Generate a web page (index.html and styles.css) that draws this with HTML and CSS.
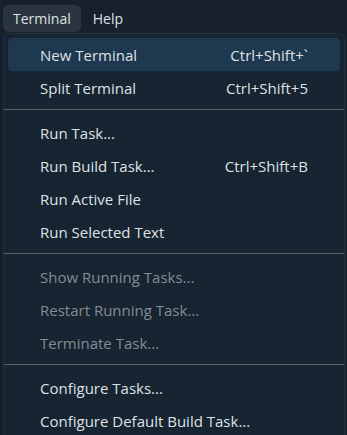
FILE: index.html
```html
<!DOCTYPE html>
<html lang="en">
<head>
    <meta charset="UTF-8">
    <meta name="viewport" content="width=device-width, initial-scale=1.0">
    <title>Terminal Menu</title>
    <link rel="stylesheet" href="styles.css">
</head>
<body>
    <div class="menubar">
        <div class="menubar-item active">Terminal</div>
        <div class="menubar-item">Help</div>
    </div>
    <div class="menu">
        <div class="menu-item selected"><span>New Terminal</span><span class="key">Ctrl+Shift+`</span></div>
        <div class="menu-item"><span>Split Terminal</span><span class="key">Ctrl+Shift+5</span></div>
        <div class="separator"></div>
        <div class="menu-item"><span>Run Task...</span></div>
        <div class="menu-item"><span>Run Build Task...</span><span class="key">Ctrl+Shift+B</span></div>
        <div class="menu-item"><span>Run Active File</span></div>
        <div class="menu-item"><span>Run Selected Text</span></div>
        <div class="separator"></div>
        <div class="menu-item disabled"><span>Show Running Tasks...</span></div>
        <div class="menu-item disabled"><span>Restart Running Task...</span></div>
        <div class="menu-item disabled"><span>Terminate Task...</span></div>
        <div class="separator"></div>
        <div class="menu-item"><span>Configure Tasks...</span></div>
        <div class="menu-item"><span>Configure Default Build Task...</span></div>
    </div>
</body>
</html>
```

FILE: styles.css
```css
body, html {
    margin: 0;
    padding: 0;
    overflow: hidden;
    height: 100%;
    background: #16212c;
    font-family: "Open Sans", "Noto Sans", sans-serif;
    font-size: 15px;
    color: #dfe2e5;
}

.menubar {
    display: flex;
    padding: 5px 3px 0;
    height: 29px;
    box-sizing: border-box;
    gap: 2px;
    font-size: 14px;
}

.menubar-item {
    height: 27px;
    line-height: 27px;
    padding: 0 10px;
    border-radius: 6px;
}

.menubar-item.active {
    background: #29343f;
}

.menu {
    margin: 4px 2px 0 3px;
    padding: 4px 4px;
    background: #172431;
    border: 1px solid #22303d;
    border-bottom: none;
    border-radius: 6px 6px 0 0;
}

.menu-item {
    display: flex;
    justify-content: space-between;
    align-items: center;
    height: 33px;
    padding: 0 32px 0 32px;
    border-radius: 4px;
}

.menu-item.selected {
    background: #1e3850;
}

.menu-item.disabled {
    color: #858c93;
}

.separator {
    height: 1px;
    background: #5c6167;
    margin: 5px -4px 6px;
}
```
